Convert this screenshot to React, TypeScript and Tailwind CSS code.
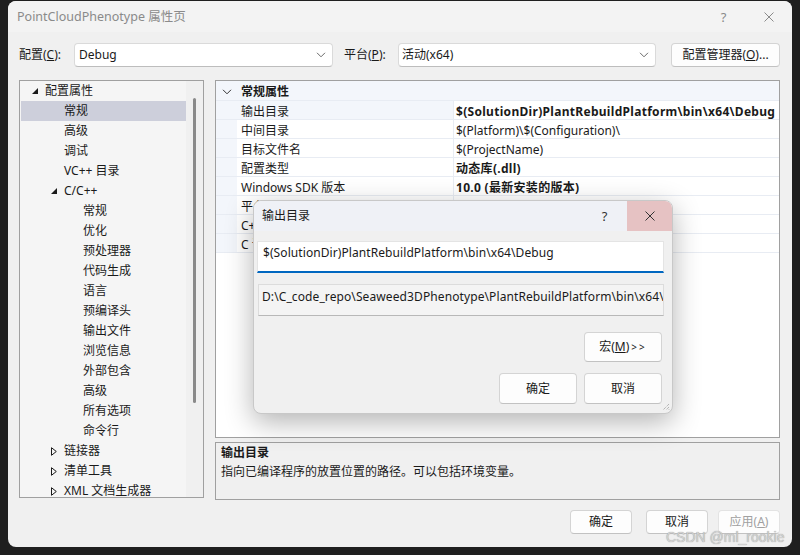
import React from 'react';

/* ─── small drawings ─── */
function Chevron({ className = '' }: { className?: string }) {
  return (
    <svg width="10" height="6" viewBox="0 0 10 6" className={className}>
      <path d="M1 0.8 L5 4.8 L9 0.8" fill="none" stroke="currentColor" strokeWidth="1" />
    </svg>
  );
}

function Expanded() {
  return (
    <svg width="6" height="6" viewBox="0 0 6 6" className="text-[#1a1a1a]">
      <path d="M6 0 L6 6 L0 6 Z" fill="currentColor" />
    </svg>
  );
}

function Collapsed() {
  return (
    <svg width="6" height="9" viewBox="0 0 6 9" className="text-[#1a1a1a]">
      <path d="M0.5 0.7 L5.3 4.5 L0.5 8.3 Z" fill="none" stroke="currentColor" strokeWidth="1" />
    </svg>
  );
}

function CloseX({ className = '' }: { className?: string }) {
  return (
    <svg width="10" height="10" viewBox="0 0 10 10" className={className}>
      <path d="M0.5 0.5 L9.5 9.5 M9.5 0.5 L0.5 9.5" stroke="currentColor" strokeWidth="1" />
    </svg>
  );
}

function Grip() {
  return (
    <svg width="8" height="8" viewBox="0 0 8 8" className="text-[#9a9a9a]">
      <path d="M7 1 L1 7 M7 4 L4 7 M7 6.5 L6.5 7" stroke="currentColor" strokeWidth="1" strokeDasharray="1 1" />
    </svg>
  );
}

/* ─── tree ─── */
interface TreeItem {
  label: string;
  level: number;
  mark?: 'open' | 'closed';
  selected?: boolean;
}

const TREE: TreeItem[] = [
  { label: '配置属性', level: 0, mark: 'open' },
  { label: '常规', level: 1, selected: true },
  { label: '高级', level: 1 },
  { label: '调试', level: 1 },
  { label: 'VC++ 目录', level: 1 },
  { label: 'C/C++', level: 1, mark: 'open' },
  { label: '常规', level: 2 },
  { label: '优化', level: 2 },
  { label: '预处理器', level: 2 },
  { label: '代码生成', level: 2 },
  { label: '语言', level: 2 },
  { label: '预编译头', level: 2 },
  { label: '输出文件', level: 2 },
  { label: '浏览信息', level: 2 },
  { label: '外部包含', level: 2 },
  { label: '高级', level: 2 },
  { label: '所有选项', level: 2 },
  { label: '命令行', level: 2 },
  { label: '链接器', level: 1, mark: 'closed' },
  { label: '清单工具', level: 1, mark: 'closed' },
  { label: 'XML 文档生成器', level: 1, mark: 'closed' },
];

const PAD = ['pl-[24px]', 'pl-[43px]', 'pl-[62px]'];
const MARK_PAD = ['pl-[11px]', 'pl-[30px]', 'pl-[49px]'];

function TreeRow({ item }: { item: TreeItem }) {
  return (
    <div
      className={`h-[20px] flex items-center whitespace-nowrap mr-[17px] ${item.mark ? MARK_PAD[item.level] : PAD[item.level]} ${item.selected ? 'bg-[#cdcfdb]' : ''}`}
    >
      {item.mark && (
        <span className="w-[13px] flex items-center">
          {item.mark === 'open' ? <Expanded /> : <Collapsed />}
        </span>
      )}
      <span>{item.label}</span>
    </div>
  );
}

/* ─── property grid ─── */
interface Prop {
  name: string;
  value: string;
  bold?: boolean;
  current?: boolean;
}

const PROPS: Prop[] = [
  { name: '输出目录', value: '$(SolutionDir)PlantRebuildPlatform\\bin\\x64\\Debug', bold: true, current: true },
  { name: '中间目录', value: '$(Platform)\\$(Configuration)\\' },
  { name: '目标文件名', value: '$(ProjectName)' },
  { name: '配置类型', value: '动态库(.dll)', bold: true },
  { name: 'Windows SDK 版本', value: '10.0 (最新安装的版本)', bold: true },
  { name: '平台工具集', value: 'Visual Studio 2022 (v143)' },
  { name: 'C++ 语言标准', value: '默认(ISO C++14 标准)' },
  { name: 'C 语言标准', value: '默认(旧 MSVC)' },
];

function PropRow({ p }: { p: Prop }) {
  return (
    <div className="h-[19px] flex border-b border-[#e8ecf3]">
      <div className="w-[21px] shrink-0 bg-[#f3f6fb]" />
      <div className={`w-[217px] shrink-0 pl-[4px] pt-[4px] flex items-center border-r border-[#e8ecf3] whitespace-nowrap ${p.current ? 'bg-[#f3f6fb]' : 'bg-white'}`}>
        {p.name}
      </div>
      <div className={`flex-1 pl-[2px] pt-[4px] flex items-center bg-white whitespace-nowrap overflow-hidden ${p.bold ? 'font-bold tracking-[0.3px]' : ''}`}>
        {p.value}
      </div>
    </div>
  );
}

function Btn({ children, className = '' }: { children: React.ReactNode; className?: string }) {
  return (
    <div className={`flex items-center justify-center bg-[#fdfdfd] border border-[#d4d4d4] border-b-[#c2c2c2] rounded-[4px] ${className}`}>
      {children}
    </div>
  );
}

export default function App() {
  return (
    <div className="relative w-[800px] h-[555px] overflow-hidden bg-[#1f1f1f] pt-px px-[8px] font-['Noto_Sans','Noto_Sans_CJK_SC',sans-serif] text-[12px] leading-[18px] text-[#1a1a1a]">
      {/* Window */}
      <div className="h-[546px] bg-[#f0f0f0] rounded-[8px] flex flex-col overflow-hidden">
        {/* Title bar */}
        <div className="h-[31px] shrink-0 flex items-center bg-[#f3f3f3]">
          <span className="pl-[9px] text-[#8a8a8a] text-[12.5px]">PointCloudPhenotype 属性页</span>
          <div className="ml-auto flex h-full">
            <div className="w-[45px] flex items-center justify-center text-[#8a8a8a] text-[13px]">?</div>
            <div className="w-[46px] flex items-center justify-center text-[#8a8a8a]">
              <CloseX />
            </div>
          </div>
        </div>

        <div className="flex-1 flex flex-col pl-[11px] pr-[12px]">
          {/* Configuration row */}
          <div className="mt-[11px] h-[24px] flex items-center">
            <span className="w-[55px]">配置(<span className="underline">C</span>):</span>
            <div className="w-[259px] h-[24px] flex items-center pl-[4px] pr-[6px] bg-white border border-[#dadada] border-b-[#bdbdbd] rounded-[4px]">
              <span>Debug</span>
              <Chevron className="ml-auto text-[#6a6a6a]" />
            </div>
            <span className="ml-[11px] w-[54px]">平台(<span className="underline">P</span>):</span>
            <div className="w-[258px] h-[24px] flex items-center pl-[3px] pr-[6px] bg-white border border-[#dadada] border-b-[#bdbdbd] rounded-[4px]">
              <span>活动(x64)</span>
              <Chevron className="ml-auto text-[#6a6a6a]" />
            </div>
            <Btn className="ml-auto w-[109px] h-[24px] -mt-[1px]">
              配置管理器(<span className="underline">O</span>)...
            </Btn>
          </div>

          {/* Main area */}
          <div className="mt-[13px] h-[420px] flex">
            {/* Tree */}
            <div className="w-[185px] h-[418px] shrink-0 border border-[#a0a0a0] bg-[#f5f5f5] relative overflow-hidden pl-px">
              {TREE.map((item, i) => (
                <TreeRow key={i} item={item} />
              ))}
              {/* vertical scrollbar */}
              <div className="absolute top-0 right-0 w-[17px] h-full bg-[#f0f0f0] flex justify-center pt-[17px]">
                <div className="w-[3px] h-[305px] rounded-full bg-[#8a8a8a]" />
              </div>
            </div>

            {/* Right column */}
            <div className="ml-[11px] flex-1 flex flex-col">
              <div className="h-[358px] border border-[#a0a0a0] bg-white flex flex-col overflow-hidden">
                <div className="h-[20px] pt-[2px] flex items-center bg-[#f3f6fb] border-b border-[#e8ecf3]">
                  <span className="w-[21px] flex justify-center">
                    <Chevron className="text-[#333]" />
                  </span>
                  <span className="pl-[4px] font-bold">常规属性</span>
                </div>
                {PROPS.map((p, i) => (
                  <PropRow key={i} p={p} />
                ))}
              </div>
              <div className="mt-[4px] h-[58px] border border-[#a0a0a0] bg-[#f0f0f0] pl-[5px] pt-[1px]">
                <div className="font-bold">输出目录</div>
                <div className="mt-px">指向已编译程序的放置位置的路径。可以包括环境变量。</div>
              </div>
            </div>
          </div>

          {/* Bottom buttons */}
          <div className="mt-[10px] flex justify-end">
            <Btn className="w-[62px] h-[24px]">确定</Btn>
            <Btn className="ml-[14px] w-[62px] h-[24px]">取消</Btn>
            <Btn className="ml-[10px] w-[62px] h-[24px] text-[#a0a0a0] bg-[#f7f7f7] border-[#e3e3e3]">
              应用(<span className="underline">A</span>)
            </Btn>
          </div>
        </div>
      </div>

      {/* Modal dialog over the property page */}
      <div className="absolute left-[253px] top-[200px] w-[420px] h-[214px] rounded-[8px] bg-[#f0f0f0] border border-[#c8c8c8] shadow-[0_8px_28px_rgba(0,0,0,0.3)] flex flex-col overflow-hidden">
        <div className="h-[30px] shrink-0 flex items-center bg-[#eff1f6]">
          <span className="pl-[8px]">输出目录</span>
          <span className="ml-auto w-[45px] text-center text-[13px] text-[#333]">?</span>
          <div className="w-[45px] h-full bg-[#e6c2c3] flex items-center justify-center text-[#333]">
            <CloseX />
          </div>
        </div>
        <div className="flex-1 flex flex-col pl-[3px] pr-[8px] relative">
          <div className="mt-[10px] h-[32px] bg-white border border-[#e4e4e4] border-b-2 border-b-[#0067c0] pl-[5px] pt-[2px] whitespace-nowrap tracking-[0.08px]">
            $(SolutionDir)PlantRebuildPlatform\bin\x64\Debug
          </div>
          <div className="mt-[11px] ml-px h-[32px] bg-[#f4f4f4] border border-[#dcdcdc] border-b-[#b8b8b8] pl-[3px] pt-[3px] whitespace-nowrap overflow-hidden tracking-[0.1px]">
            D:\C_code_repo\Seaweed3DPhenotype\PlantRebuildPlatform\bin\x64\Debug\
          </div>
          <div className="mt-[16px] flex justify-end pr-[2px]">
            <Btn className="w-[78px] h-[30px]">
              宏(<span className="underline">M</span>)<span className="ml-[2px] text-[10px] tracking-[2px]">&gt;&gt;</span>
            </Btn>
          </div>
          <div className="mt-[11px] flex justify-end pr-[2px]">
            <Btn className="w-[78px] h-[31px] border-[#0067c0] border-b-[#0067c0]">确定</Btn>
            <Btn className="ml-[7px] w-[78px] h-[31px]">取消</Btn>
          </div>
          <div className="absolute right-[2px] bottom-[2px]">
            <Grip />
          </div>
        </div>
      </div>

      {/* Watermark */}
      <div className="absolute left-[666px] top-[529px] text-[14px] leading-[17px] whitespace-nowrap text-[#d2d2d2] font-['Liberation_Sans',sans-serif] [text-shadow:0_0_1px_#8a8a8a]">
        CSDN @ml_rookie
      </div>
    </div>
  );
}
